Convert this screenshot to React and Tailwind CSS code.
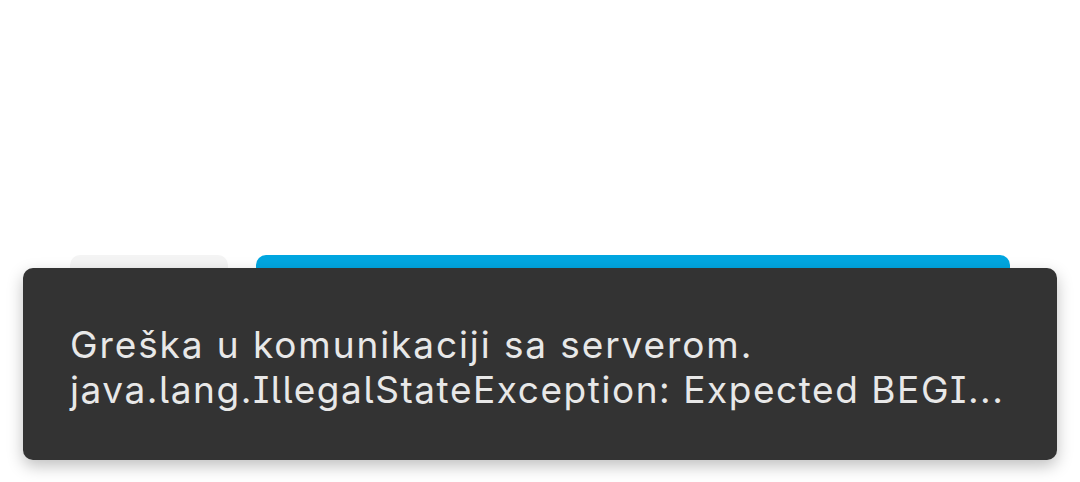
// Screen with two action buttons and a dark error toast laid over them
export default function App() {
  return (
    <div className="relative w-[1080px] h-[482px] overflow-hidden bg-white" style={{ fontFamily: "Inter, 'Noto Sans', sans-serif" }}>
      {/* Buttons row, mostly hidden by the toast */}
      <div className="flex gap-[28px] pl-[70px] pt-[255px]">
        <div className="w-[158px] h-[60px] rounded-[10px] bg-[#f4f4f4]" />
        <div className="w-[754px] h-[60px] rounded-[10px] bg-[#00a6e0]" />
      </div>

      {/* Error toast */}
      <div className="absolute left-[23px] top-[268px] w-[1034px] h-[192px] rounded-[10px] bg-[#333333] shadow-[0_6px_16px_rgba(0,0,0,0.25)] flex items-center pl-[47px] pr-[30px] pt-[6px]">
        <p className="text-[#e8e8e8] text-[37px] leading-[45px] whitespace-nowrap [font-feature-settings:'cv05','cv08']">
          <span className="tracking-[1.9px]">Greška u komunikaciji sa serverom.</span>
          <br />
          <span className="tracking-[1.55px]">java.lang.IllegalStateException: Expected BEGI...</span>
        </p>
      </div>
    </div>
  );
}
